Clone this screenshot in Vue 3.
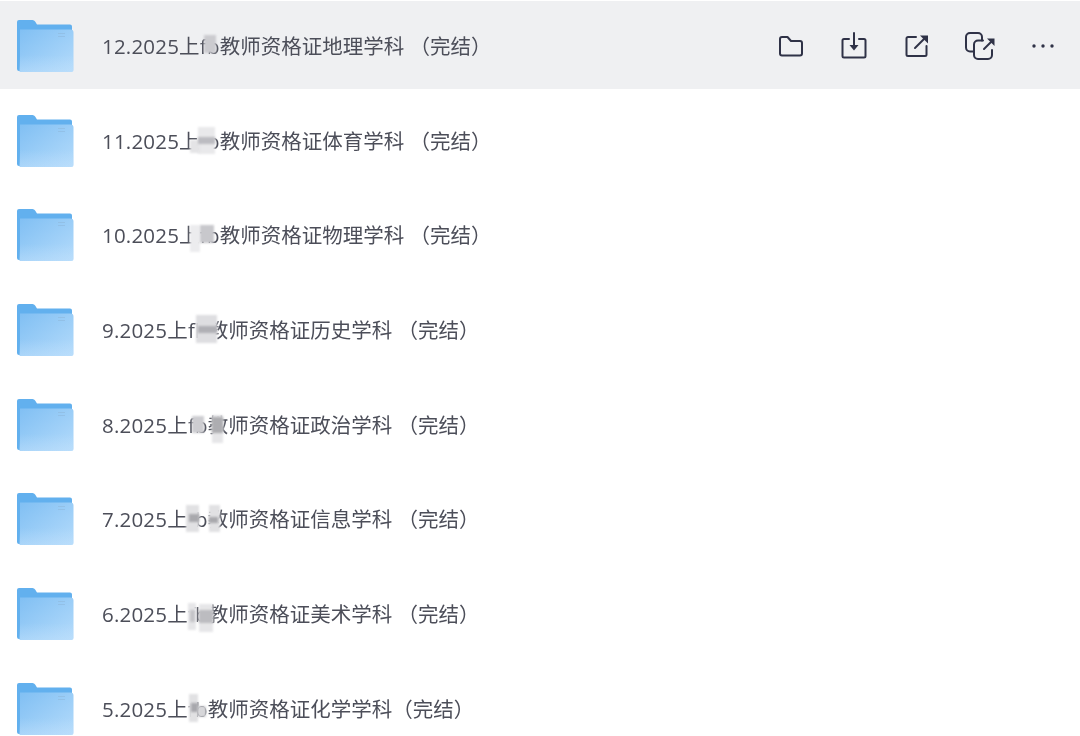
<script setup>
const rows = [
  { lead: '12.2025上fb', rest: '教师资格证地理学科 （完结）', patches: [[102, -11, 12, 18, '#cbcbcf']] },
  { lead: '11.2025上fb', rest: '教师资格证体育学科 （完结）', patches: [[96, -14, 17, 27, '#e9e9eb'], [88, -1, 10, 13, '#e4e4e6'], [96, -4, 17, 7, '#bcbcc1']] },
  { lead: '10.2025上fb', rest: '教师资格证物理学科 （完结）', patches: [[88, -10, 10, 27, '#ececee'], [98, -10, 14, 18, '#c8c8cc']] },
  { lead: '9.2025上fb', rest: '教师资格证历史学科 （完结）', patches: [[94, -15, 21, 28, '#dedee1'], [96, -4, 19, 7, '#b0b0b5']] },
  { lead: '8.2025上fb', rest: '教师资格证政治学科 （完结）', patches: [[90, -9, 12, 17, '#cdcdd1'], [110, -10, 11, 28, '#e6e6e8'], [110, -8, 11, 16, '#adadb1']] },
  { lead: '7.2025上fb', rest: '教师资格证信息学科 （完结）', patches: [[84, -14, 13, 27, '#e1e1e3'], [87, -5, 10, 8, '#a9a9ad'], [107, -14, 11, 27, '#e1e1e3'], [107, -2, 9, 6, '#a9a9ad']] },
  { lead: '6.2025上fb', rest: '教师资格证美术学科 （完结）', patches: [[86, -11, 8, 27, '#e6e6e8'], [97, -10, 14, 28, '#e6e6e8'], [97, -4, 14, 13, '#bcbcc0'], [88, -4, 5, 12, '#c4c4c8']] },
  { lead: '5.2025上fb', rest: '教师资格证化学学科（完结）', patches: [[87, -15, 9, 28, '#e1e1e3'], [89, -6, 7, 9, '#a8a8ad'], [96, -3, 8, 11, '#d6d6d9']] },
]
</script>

<template>
  <main class="list">
    <div v-for="(row, i) in rows" :key="row.lead" class="row" :class="{ active: i === 0 }">
      <svg class="folder" width="58" height="54" viewBox="0 0 58 54" aria-hidden="true">
        <defs>
          <linearGradient :id="`front${i}`" x1="0" y1="0" x2="1" y2="1">
            <stop offset="0" stop-color="#80bff3" />
            <stop offset="1" stop-color="#b4dbfb" />
          </linearGradient>
          <linearGradient :id="`fade${i}`" x1="0" y1="0" x2="0" y2="1">
            <stop offset="0" stop-color="#c4e2fc" stop-opacity="0" />
            <stop offset="1" stop-color="#c4e2fc" stop-opacity="0.4" />
          </linearGradient>
        </defs>
        <path d="M1 3a2 2 0 0 1 2-2h13.500a3 3 0 0 1 2.600 1.500L21 5.500H54a2 2 0 0 1 2 2V52H3a2 2 0 0 1-2-2z" fill="#62b0ee" />
        <path d="M4 10.500H54.500a3 3 0 0 1 3 3V51a2 2 0 0 1-2 2H2.500A1.500 1.500 0 0 0 4 51z" :fill="`url(#front${i})`" />
        <path d="M3 53h52.500a2 2 0 0 0 2-2V36H4z" :fill="`url(#fade${i})`" />
        <path d="M42 14.500h7M42 17.500h7" stroke="#8fb9dd" stroke-width="1" opacity="0.6" />
      </svg>
      <span class="name">
        <span class="lead">{{ row.lead }}</span>{{ row.rest }}
        <i
          v-for="(p, k) in row.patches"
          :key="k"
          class="patch"
          :style="{ left: p[0] + 'px', top: `calc(50% + ${p[1]}px)`, width: p[2] + 'px', height: p[3] + 'px', background: p[4] }"
        />
      </span>
      <div v-if="i === 0" class="actions">
        <span class="act">
          <svg width="26" height="24" viewBox="0 0 26 24" fill="none" stroke="#2f3247" stroke-width="2" stroke-linejoin="round" stroke-linecap="round">
            <path d="M2 5a2 2 0 0 1 2-2h5.500l3.500 4H22a2 2 0 0 1 2 2V19.500a2 2 0 0 1-2 2H4a2 2 0 0 1-2-2z" />
          </svg>
        </span>
        <span class="act">
          <svg width="26" height="28" viewBox="0 0 26 28" fill="none" stroke="#2f3247" stroke-width="2" stroke-linejoin="round" stroke-linecap="round">
            <path d="M8 7H3a1.500 1.500 0 0 0-1.500 1.500V24A1.500 1.500 0 0 0 3 25.500h20a1.500 1.500 0 0 0 1.500-1.500V8.500A1.500 1.500 0 0 0 23 7h-5" />
            <path d="M13 1v13" />
            <path d="M8.500 13h9L13 18.500z" fill="#2f3247" stroke="none" />
          </svg>
        </span>
        <span class="act">
          <svg width="24" height="24" viewBox="0 0 24 24" fill="none" stroke="#2f3247" stroke-width="2" stroke-linejoin="round" stroke-linecap="round">
            <path d="M11 3H3a1.500 1.500 0 0 0-1.500 1.500v16A1.500 1.500 0 0 0 3 22h17a1.500 1.500 0 0 0 1.500-1.500V12" />
            <path d="M10 14 19 5" />
            <path d="M15 1.500h8V9.500z" fill="#2f3247" stroke="none" />
          </svg>
        </span>
        <span class="act">
          <svg width="30" height="28" viewBox="0 0 30 28" fill="none" stroke="#2f3247" stroke-width="2" stroke-linejoin="round" stroke-linecap="round">
            <path d="M8 19.500H5a4 4 0 0 1-4-4V5a4 4 0 0 1 4-4h8a4 4 0 0 1 4 4v3.500" />
            <path d="M18 8.500h-5a4 4 0 0 0-4 4V23a4 4 0 0 0 4 4h10a4 4 0 0 0 4-4v-5" />
            <path d="M19 17l7-7" />
            <path d="M22 6.500h7.500V14z" fill="#2f3247" stroke="none" />
          </svg>
        </span>
        <span class="act">
          <svg width="24" height="6" viewBox="0 0 24 6" fill="#2f3247">
            <circle cx="3" cy="3" r="1.700" />
            <circle cx="12" cy="3" r="1.700" />
            <circle cx="21" cy="3" r="1.700" />
          </svg>
        </span>
      </div>
    </div>
  </main>
</template>

<style>
html, body { background: #fff; }
</style>

<style scoped>
.list {
  display: flex;
  flex-direction: column;
  gap: 6.7px;
  width: 1080px;
  height: 736px;
  overflow: hidden;
  padding-top: 1px;
  box-sizing: border-box;
  background: #fff;
  font-family: "Open Sans", "Noto Sans CJK SC", sans-serif;
}
.row {
  flex: none;
  display: flex;
  align-items: center;
  height: 88px;
  padding: 2px 0 0 16px;
  box-sizing: border-box;
}
.row.active { background: #eff0f2; }
.folder { flex: none; margin-right: 28px; }
.name {
  position: relative;
  font-size: 20.500px;
  line-height: 28px;
  color: #4c4e59;
  white-space: nowrap;
  filter: blur(0.35px);
}
.lead { letter-spacing: 0.2px; }
.patch {
  position: absolute;
  filter: blur(1.1px);
}
.actions {
  margin-left: auto;
  display: flex;
  align-items: center;
  padding-right: 5.500px;
}
.act {
  width: 63px;
  display: flex;
  justify-content: center;
  align-items: center;
}
</style>
